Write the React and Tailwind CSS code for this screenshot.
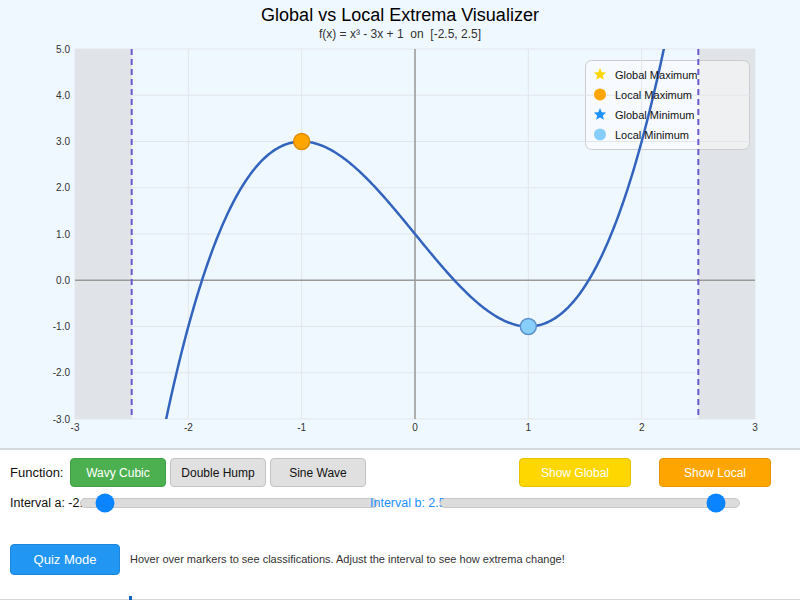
import React from "react";

const X0 = 415;
const SX = 113.33;
const Y0 = 280.25;
const SY = 46.25;
const px = (x) => X0 + x * SX;
const py = (y) => Y0 - y * SY;
const f = (x) => x * x * x - 3 * x + 1;

function curvePath() {
  const pts = [];
  for (let i = 0; i <= 600; i++) {
    const x = -3 + (6 * i) / 600;
    pts.push(`${i ? "L" : "M"}${px(x).toFixed(2)},${py(f(x)).toFixed(2)}`);
  }
  return pts.join(" ");
}

function Star({ cx, cy, r, fill }) {
  const pts = [];
  for (let i = 0; i < 10; i++) {
    const a = -Math.PI / 2 + (i * Math.PI) / 5;
    const rr = i % 2 ? r * 0.45 : r;
    pts.push(`${(cx + rr * Math.cos(a)).toFixed(2)},${(cy + rr * Math.sin(a)).toFixed(2)}`);
  }
  return <polygon points={pts.join(" ")} fill={fill} />;
}

function Chart() {
  const xs = [-3, -2, -1, 0, 1, 2, 3];
  const ys = [-3, -2, -1, 0, 1, 2, 3, 4, 5];
  return (
    <svg width="800" height="408" viewBox="0 42 800 408" className="block" style={{ fontFamily: "'Liberation Sans', Arial, sans-serif" }}>
      <defs>
        <clipPath id="plot">
          <rect x="75" y="49" width="680" height="370" />
        </clipPath>
      </defs>
      <rect x="75" y="49" width="56.7" height="370" fill="#e0e4e8" />
      <rect x={px(2.5)} y="49" width={755 - px(2.5)} height="370" fill="#e0e4e8" />
      <rect x="585.5" y="60.5" width="164" height="89" rx="6" fill="#ffffff" fillOpacity="0.45" stroke="#cccccc" />
      {xs.map((x) => (
        <line key={"gx" + x} x1={px(x)} x2={px(x)} y1="49" y2="419" stroke="#e2e6ea" strokeWidth="1" />
      ))}
      {ys.map((y) => (
        <line key={"gy" + y} x1="75" x2="755" y1={py(y)} y2={py(y)} stroke="#e2e6ea" strokeWidth="1" />
      ))}
      <line x1={px(0)} x2={px(0)} y1="49" y2="419" stroke="#999" strokeWidth="1.5" />
      <line x1="75" x2="755" y1={py(0)} y2={py(0)} stroke="#999" strokeWidth="1.5" />
      {ys.map((y) => (
        <text key={"ly" + y} x="70" y={py(y) + 3.5} fontSize="10" fill="#333" textAnchor="end">
          {y.toFixed(1)}
        </text>
      ))}
      {xs.map((x) => (
        <text key={"lx" + x} x={px(x)} y="431" fontSize="10" fill="#333" textAnchor="middle">
          {x}
        </text>
      ))}
      <line x1={px(-2.5)} x2={px(-2.5)} y1="49" y2="419" stroke="#6a5acd" strokeWidth="2" strokeDasharray="6 4" />
      <line x1={px(2.5)} x2={px(2.5)} y1="49" y2="419" stroke="#6a5acd" strokeWidth="2" strokeDasharray="6 4" />
      <path d={curvePath()} fill="none" stroke="#3264be" strokeWidth="2.5" clipPath="url(#plot)" />
      <circle cx={px(-1)} cy={py(3)} r="8" fill="#ffa500" stroke="#e08e00" strokeWidth="1.5" />
      <circle cx={px(1)} cy={py(-1)} r="8" fill="#87cefa" stroke="#5b8fc8" strokeWidth="1.5" />
      <Star cx={600} cy={74.5} r={6.5} fill="#ffd700" />
      <circle cx="600" cy="94.5" r="6" fill="#ffa500" />
      <Star cx={600} cy={114.5} r={6.5} fill="#1e90ff" />
      <circle cx="600" cy="134.5" r="6" fill="#87cefa" />
      <text x="615" y="78.5" fontSize="11" fill="#111">Global Maximum</text>
      <text x="615" y="98.5" fontSize="11" fill="#111">Local Maximum</text>
      <text x="615" y="118.5" fontSize="11" fill="#111">Global Minimum</text>
      <text x="615" y="138.5" fontSize="11" fill="#111">Local Minimum</text>
    </svg>
  );
}

function Btn({ children, className }) {
  return (
    <div className={"flex h-[29px] w-[96px] shrink-0 items-center justify-center rounded-[4px] border text-[12px] " + className}>
      {children}
    </div>
  );
}

function Track({ thumb, className }) {
  return (
    <div className={"relative h-[10px] shrink-0 rounded-full border border-[#c8c8c8] bg-[#dcdcdc] " + className}>
      <div className="absolute top-1/2 h-[19px] w-[19px] -translate-x-1/2 -translate-y-1/2 rounded-full bg-[#0a84ff]" style={{ left: thumb }} />
    </div>
  );
}

export default function App() {
  return (
    <div className="h-[602px] w-[800px] overflow-hidden bg-white text-[#111]" style={{ fontFamily: "'Liberation Sans', Arial, sans-serif" }}>
      <div className="h-[450px] border-b-2 border-[#d6d9dc] bg-[#f0f8ff]">
        <div className="flex h-[42px] flex-col items-center">
          <div className="mt-[4px] text-[18px] leading-[22px] text-black">Global vs Local Extrema Visualizer</div>
          <div className="mt-[1px] text-[12px] leading-[14px] text-[#333]">f(x) = x³ - 3x + 1&nbsp;&nbsp;on&nbsp;&nbsp;[-2.5, 2.5]</div>
        </div>
        <Chart />
      </div>

      <div className="flex items-center px-[10px] pt-[8px]">
        <span className="w-[60px] text-[13px]">Function:</span>
        <Btn className="border-[#43a047] bg-[#4caf50] text-white">Wavy Cubic</Btn>
        <Btn className="ml-[4px] border-[#c4c4c4] bg-[#e0e0e0] text-[#111]">Double Hump</Btn>
        <Btn className="ml-[4px] border-[#c4c4c4] bg-[#e0e0e0] text-[#111]">Sine Wave</Btn>
        <Btn className="ml-[153px] w-[112px] border-[#e6c200] bg-[#ffd700] text-white">Show Global</Btn>
        <Btn className="ml-[28px] w-[112px] border-[#e69500] bg-[#ffa500] text-white">Show Local</Btn>
      </div>

      <div className="mt-[6px] flex h-[20px] items-center px-[10px] text-[12.5px]">
        <span className="relative w-[70px] whitespace-nowrap">Interval a: -2.5</span>
        <Track thumb="24px" className="w-[298px]" />
        <span className="relative -ml-[8px] w-[70px] whitespace-nowrap text-[#1e90ff]">Interval b: 2.5</span>
        <Track thumb="275px" className="w-[300px]" />
      </div>

      <div className="mt-[31px] flex items-center px-[10px]">
        <div className="flex h-[31px] w-[110px] items-center justify-center rounded-[4px] border border-[#1c86dc] bg-[#2196f3] text-[13px] text-white">
          Quiz Mode
        </div>
        <span className="ml-[10px] text-[11px] text-[#333]">Hover over markers to see classifications. Adjust the interval to see how extrema change!</span>
      </div>

      <div className="relative mt-[24px] border-t border-[#d6d6d6]">
        <div className="absolute -top-[4px] left-[129px] h-[4px] w-[3px] bg-[#1565c0]" />
      </div>
    </div>
  );
}
